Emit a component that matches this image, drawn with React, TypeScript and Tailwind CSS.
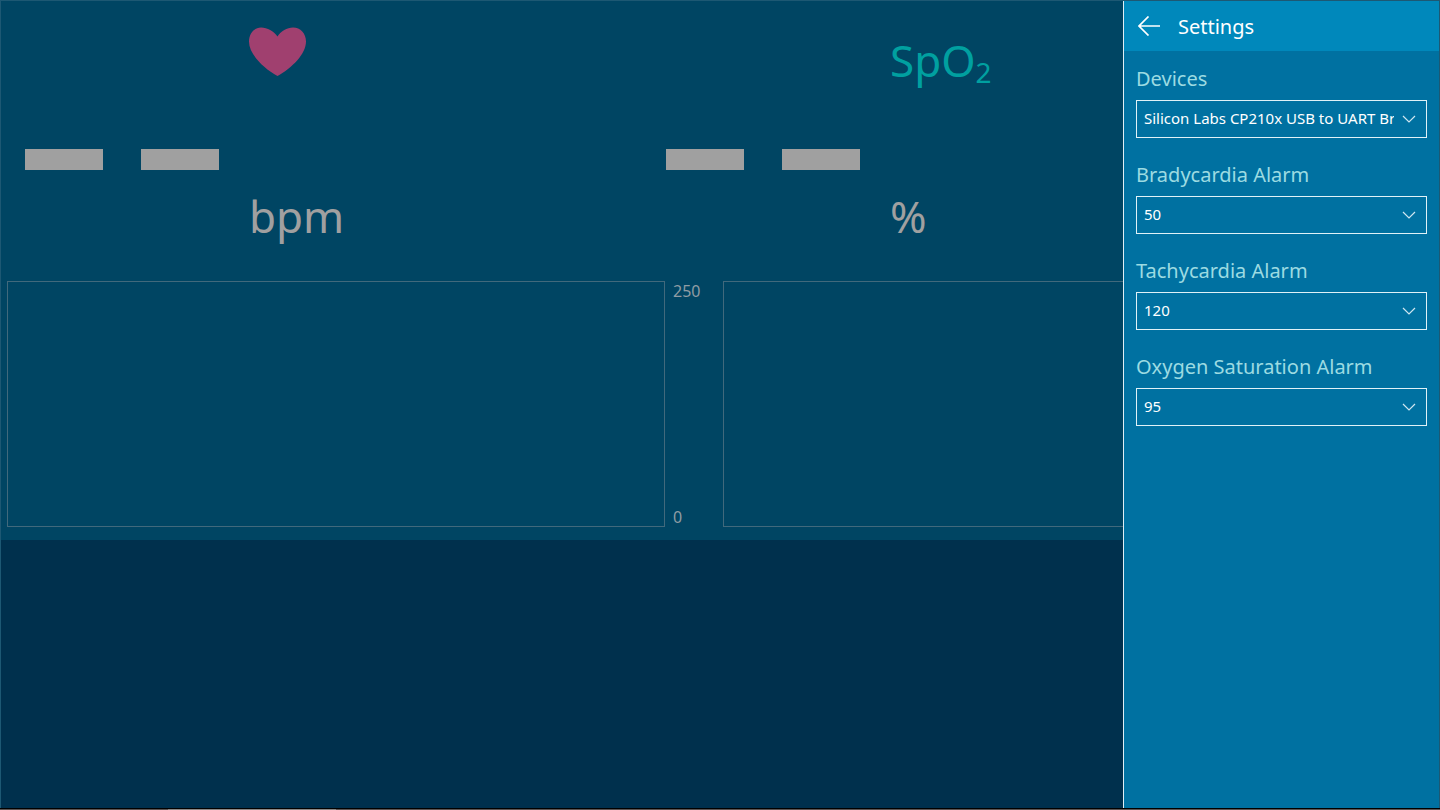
import React, { useState } from "react";

type Option = { value: string; label: string };

type SettingProps = {
  id: string;
  label: string;
  options: Option[];
  initial: string;
};

const toOptions = (values: number[]): Option[] =>
  values.map((value) => ({ value: String(value), label: String(value) }));

const settings: SettingProps[] = [
  {
    id: "device",
    label: "Devices",
    options: [{ value: "cp210x", label: "Silicon Labs CP210x USB to UART Bridge" }],
    initial: "cp210x",
  },
  { id: "bradycardia", label: "Bradycardia Alarm", options: toOptions([40, 45, 50, 55, 60]), initial: "50" },
  { id: "tachycardia", label: "Tachycardia Alarm", options: toOptions([100, 110, 120, 130]), initial: "120" },
  { id: "oxygen", label: "Oxygen Saturation Alarm", options: toOptions([85, 90, 95]), initial: "95" },
];

function Setting({ id, label, options, initial }: SettingProps) {
  const [value, setValue] = useState(initial);

  return (
    <div className="flex flex-col gap-1.5">
      <label htmlFor={id} className="text-xl leading-[30px] text-[#9cdbe2]">
        {label}
      </label>
      <div className="relative">
        <select
          id={id}
          value={value}
          onChange={(e) => setValue(e.target.value)}
          className="block h-[38px] w-full appearance-none border border-[#e0f2f8] bg-transparent pr-8 pb-0.5 pl-[7px] text-[15px] text-white outline-none"
        >
          {options.map((option) => (
            <option key={option.value} value={option.value} className="bg-[#0071a1]">
              {option.label}
            </option>
          ))}
        </select>
        <svg
          viewBox="0 0 14 8"
          className="pointer-events-none absolute top-[15px] right-[11px] h-2 w-3.5 fill-none stroke-[#cfe6f0]"
        >
          <path d="M1 1l6 6 6-6" strokeWidth="1.2" />
        </svg>
      </div>
    </div>
  );
}

function Reading({ title, unit, label }: { title: React.ReactNode; unit: string; label: string }) {
  return (
    <section aria-label={label} className="flex h-[280px] w-[641px] shrink-0 gap-[30px] pl-6">
      <div className="mt-[148px] flex h-[21px] w-[194px] justify-between">
        <span className="w-[78px] bg-[#a0a0a0]" />
        <span className="w-[78px] bg-[#a0a0a0]" />
      </div>
      <div className="flex flex-col justify-between pt-[26px] pb-8 text-[44px] leading-[66px]">
        <div>{title}</div>
        <div className="text-[#a0a0a0]">{unit}</div>
      </div>
    </section>
  );
}

function Chart({ max, min }: { max: number; min: number }) {
  return (
    <div className="flex min-w-0 flex-1">
      <div className="h-[246px] flex-1 border border-[#41697c]" />
      <div className="flex w-[58px] flex-col justify-between pl-2 text-base leading-5 text-[#8f9ca3]">
        <span>{max}</span>
        <span>{min}</span>
      </div>
    </div>
  );
}

function Heart() {
  return (
    <svg viewBox="0 0 57 49" className="h-[49px] w-[57px] fill-[#a0406f]">
      <path d="M28.500 9.500C32 4 38 0.500 44 0.500C51.500 0.500 57 6.500 57 14.500C57 27 43 41 28.500 49C14 41 0 27 0 14.500C0 6.500 5 0.500 12 0.500C18.500 0.500 24.500 4 28.500 9.500Z" />
    </svg>
  );
}

function SettingsPane() {
  return (
    <aside className="absolute inset-y-0 right-0 w-[316px] border-l border-[#e0eef4] bg-[#0071a1]">
      <header className="flex h-[50px] items-center gap-[18px] bg-[#0088bb] pl-[14px] text-white">
        <button type="button" title="Back">
          <svg viewBox="0 0 22 20" className="h-5 w-[22px] fill-none stroke-white">
            <path d="M10.500 0.500L1 10l9.500 9.500M1 10h21" strokeWidth="1.700" />
          </svg>
        </button>
        <h1 className="pt-0.5 text-xl">Settings</h1>
      </header>
      <div className="flex flex-col gap-[22px] px-3 pt-[13px]">
        {settings.map((setting) => (
          <Setting key={setting.id} {...setting} />
        ))}
      </div>
    </aside>
  );
}

export default function App() {
  return (
    <div className="flex min-h-screen flex-col bg-[#00304d] font-['Noto_Sans',sans-serif]">
      <div className="relative flex flex-1 flex-col overflow-hidden border-x border-t border-[#1d5873]">
        <main className="bg-[#004563] pb-[13px]">
          <div className="flex">
            <Reading label="Heart rate" title={<Heart />} unit="bpm" />
            <Reading
              label="Oxygen saturation"
              title={
                <span className="text-[#00a0a0]">
                  SpO<sub className="bottom-[-6px] text-[28px]">2</sub>
                </span>
              }
              unit="%"
            />
          </div>
          <div className="flex pl-1.5">
            <Chart max={250} min={0} />
            <Chart max={100} min={0} />
          </div>
        </main>
        <SettingsPane />
      </div>
      <footer className="h-0.5 border-t border-black bg-[#5c5452]">
        <div className="ml-[168px] h-px w-[168px] bg-[#8b8785]" />
      </footer>
    </div>
  );
}
